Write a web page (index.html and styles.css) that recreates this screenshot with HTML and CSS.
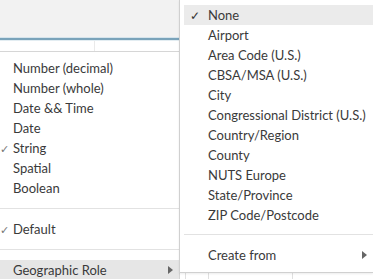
FILE: index.html
```html
<!DOCTYPE html>
<html>
<head>
<meta charset="utf-8">
<link rel="stylesheet" href="styles.css">
</head>
<body>
<div class="screen">
  <div class="toolbar"></div>
  <div class="accent"></div>
  <div class="header-row"><div class="hcell"></div><div class="hcell"></div></div>
  <div class="menu">
    <div class="item">Number (decimal)</div>
    <div class="item">Number (whole)</div>
    <div class="item">Date &amp;&amp; Time</div>
    <div class="item">Date</div>
    <div class="item"><span class="check">✓</span>String</div>
    <div class="item">Spatial</div>
    <div class="item">Boolean</div>
    <div class="sep"></div>
    <div class="item"><span class="check">✓</span>Default</div>
    <div class="sep"></div>
    <div class="item active">Geographic Role<span class="arrow"></span></div>
  </div>
  <div class="grid-bottom">
    <div class="gcell c1"></div><div class="gcell c2"></div><div class="gcell c3"></div>
  </div>
  <div class="submenu">
    <div class="sitem active"><span class="scheck">✓</span>None</div>
    <div class="sitem">Airport</div>
    <div class="sitem">Area Code (U.S.)</div>
    <div class="sitem">CBSA/MSA (U.S.)</div>
    <div class="sitem">City</div>
    <div class="sitem">Congressional District (U.S.)</div>
    <div class="sitem">Country/Region</div>
    <div class="sitem">County</div>
    <div class="sitem">NUTS Europe</div>
    <div class="sitem">State/Province</div>
    <div class="sitem">ZIP Code/Postcode</div>
    <div class="ssep"></div>
    <div class="sitem">Create from<span class="arrow"></span></div>
  </div>
</div>
</body>
</html>
```
FILE: styles.css
```css
* { box-sizing: border-box; }
html, body { margin: 0; padding: 0; background: #fff; }
body {
  font-family: Lato, "Open Sans", sans-serif;
  font-size: 13px;
  color: #3a3a3a;
}
.screen {
  position: relative;
  width: 373px;
  height: 279px;
  overflow: hidden;
  background: #fff;
}
.toolbar {
  height: 37px;
  background: #f2f2f2;
  width: 180px;
}
.accent {
  height: 4px;
  width: 180px;
  background: linear-gradient(#d6e4ec 0, #d6e4ec 1px, #7aa3ba 1px, #7aa3ba 3px, #e3edf2 3px);
}
.header-row {
  display: flex;
  width: 180px;
  height: 11px;
  border-bottom: 1px solid #d6d6d6;
}
.hcell { width: 95px; border-right: 1px solid #eaeaea; }
.hcell + .hcell { border-right: none; flex: 1; }
.menu {
  width: 180px;
  padding-top: 6px;
  border-right: 1px solid #d4d4d4;
  height: 228px;
}
.item {
  position: relative;
  height: 20px;
  line-height: 21px;
  padding-left: 13px;
  white-space: nowrap;
}
.item.active { background: #e6e6e6; }
.check {
  position: absolute;
  left: 0;
  top: 0;
  color: #777;
  font-size: 11px;
}
.sep {
  height: 1px;
  background: #e2e2e2;
  margin: 10px 0 10px 0;
}
.arrow {
  position: absolute;
  right: 6px;
  top: 6px;
  width: 0;
  height: 0;
  border-top: 4px solid transparent;
  border-bottom: 4px solid transparent;
  border-left: 5px solid #666;
}
.grid-bottom {
  position: absolute;
  left: 180px;
  top: 273px;
  width: 193px;
  height: 6px;
  display: flex;
}
.gcell { height: 6px; border-right: 1px solid #e0e0e0; }
.c1 { width: 6px; }
.c2 { width: 23px; }
.c3 { width: 84px; }
.submenu {
  position: absolute;
  left: 179px;
  top: 0;
  width: 194px;
  height: 273px;
  background: #fff;
  border-left: 1px solid #d0d0d0;
  border-bottom: 1px solid #d0d0d0;
  padding: 5px 0 0 4px;
  box-shadow: 0 1px 2px rgba(0,0,0,0.08);
}
.sitem {
  position: relative;
  height: 20px;
  line-height: 21px;
  padding-left: 24px;
  white-space: nowrap;
}
.sitem.active { background: #ebebeb; }
.scheck {
  position: absolute;
  left: 6px;
  top: 0;
  color: #333;
  font-size: 12px;
}
.ssep {
  height: 1px;
  background: #e2e2e2;
  margin: 9px 0 10px 0;
}
```
